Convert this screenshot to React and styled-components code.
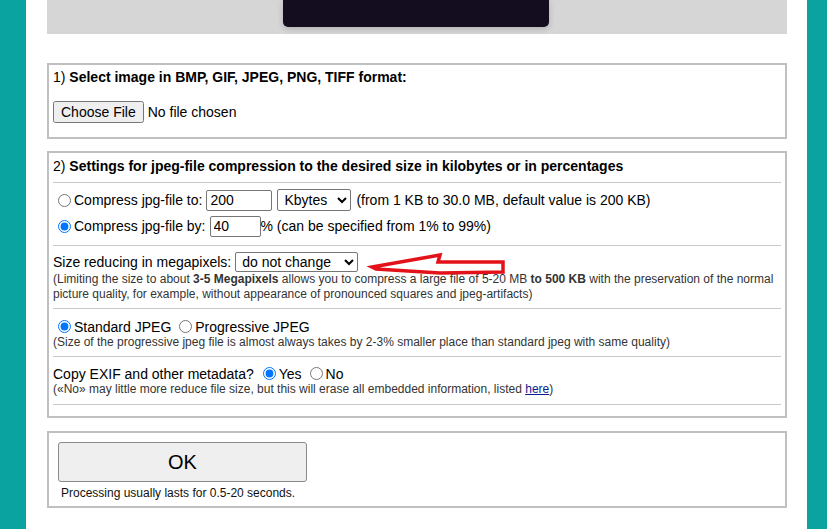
import React from "react";
import styled, { createGlobalStyle } from "styled-components";

const GlobalStyle = createGlobalStyle`
  html, body {
    margin: 0;
    padding: 0;
    background: #0aa39f;
  }
  body {
    font-family: "Liberation Sans", Arial, sans-serif;
    font-size: 14px;
    color: #000;
  }
`;

const Page = styled.div`
  min-height: 100vh;
  padding: 0 20px 0 26px;
`;

const Panel = styled.div`
  background: #fff;
  min-height: 100vh;
  padding: 0 20px 30px 21px;
`;

const Banner = styled.div`
  height: 34px;
  background: #d6d6d6;
  display: flex;
  justify-content: center;
  padding-right: 3px;
`;

const Screen = styled.div`
  width: 266px;
  height: 27px;
  background: #130d1f;
  border-radius: 0 0 5px 5px;
  box-shadow: 0 2px 6px rgba(0, 0, 0, 0.18);
`;

const Section = styled.div`
  position: relative;
  margin-top: ${(p) => p.$mt}px;
  border: 2px solid #c0c0c0;
  padding: ${(p) => p.$pad};
`;

const Heading = styled.div`
  line-height: 16px;
  font-weight: bold;

  span {
    font-weight: normal;
  }
`;

const FileRow = styled.div`
  margin-top: 16px;
  height: 22px;
  display: flex;
  align-items: center;

  input {
    font: 14px "Liberation Sans", Arial, sans-serif;
  }
`;

const Divider = styled.div`
  height: 1px;
  background: #c9c9c9;
  margin-top: ${(p) => p.$mt}px;
`;

const Row = styled.div`
  display: flex;
  align-items: center;
  white-space: nowrap;
  height: ${(p) => p.$h || 26}px;
  margin-top: ${(p) => p.$mt || 0}px;
`;

const Radio = styled.label`
  display: inline-flex;
  align-items: center;
  margin-right: ${(p) => p.$gap || 0}px;

  input {
    margin: 0 3px 0 5px;
    width: 13px;
    height: 13px;
  }
`;

const TextInput = styled.input`
  box-sizing: border-box;
  width: ${(p) => p.$w}px;
  height: 21px;
  margin: 0 0 0 4px;
  padding: 1px 3px;
  border: 1px solid #767676;
  border-radius: 2px;
  font: 14px "Liberation Sans", Arial, sans-serif;
`;

const Select = styled.select`
  box-sizing: border-box;
  width: ${(p) => p.$w}px;
  height: ${(p) => p.$h}px;
  margin: 0 5px 0 ${(p) => p.$ml}px;
  padding: 0 2px;
  border: 1px solid #767676;
  border-radius: 2px;
  background: #fff;
  font: 14px "Liberation Sans", Arial, sans-serif;
`;

const Note = styled.div`
  font-size: 12px;
  line-height: 15px;
  color: #333;

  a {
    color: #0b1b8f;
  }
`;

const OkButton = styled.button`
  display: block;
  width: 249px;
  height: 40px;
  margin-left: 9px;
  background: #efefef;
  border: 1px solid #8a8a8a;
  border-radius: 3px;
  font: 20px "Liberation Sans", Arial, sans-serif;
  color: #000;
`;

const Hint = styled.div`
  font-size: 12px;
  line-height: 15px;
  margin: 4px 0 0 12px;
  color: #111;
`;

const Arrow = styled.svg`
  position: absolute;
  left: 318px;
  top: 98px;
  overflow: visible;
`;

export default function App() {
  return (
    <>
      <GlobalStyle />
      <Page>
        <Panel>
          <Banner>
            <Screen />
          </Banner>

          <Section $mt={29} $pad="4px 4px 14px 4px">
            <Heading>
              <span>1)</span> Select image in BMP, GIF, JPEG, PNG, TIFF format:
            </Heading>
            <FileRow>
              <input type="file" />
            </FileRow>
          </Section>

          <Section $mt={12} $pad="5px 4px 11px 4px">
            <Heading>
              <span>2)</span> Settings for jpeg-file compression to the desired size in kilobytes or in percentages
            </Heading>
            <Divider $mt={8} />
            <Row $mt={4}>
              <Radio>
                <input type="radio" name="mode" />
                Compress jpg-file to:
              </Radio>
              <TextInput $w={66} defaultValue="200" />
              <Select $w={74} $h={22} $ml={5} defaultValue="kb">
                <option value="kb">Kbytes</option>
                <option value="mb">Mbytes</option>
              </Select>
              (from 1 KB to 30.0 MB, default value is 200 KB)
            </Row>
            <Row>
              <Radio>
                <input type="radio" name="mode" defaultChecked />
                Compress jpg-file by:
              </Radio>
              <TextInput $w={51} defaultValue="40" />
              % (can be specified from 1% to 99%)
            </Row>
            <Divider $mt={6} />
            <Row $mt={6} $h={20}>
              Size reducing in megapixels:
              <Select $w={123} $h={20} $ml={4} defaultValue="no">
                <option value="no">do not change</option>
              </Select>
            </Row>
            <Note>
              (Limiting the size to about <b>3-5 Megapixels</b> allows you to compress a large file of 5-20 MB <b>to 500 KB</b> with the preservation of the normal picture quality, for example, without appearance of pronounced squares and jpeg-artifacts)
            </Note>
            <Divider $mt={6} />
            <Row $mt={9} $h={17}>
              <Radio $gap={3}>
                <input type="radio" name="jpeg" defaultChecked />
                Standard JPEG
              </Radio>
              <Radio>
                <input type="radio" name="jpeg" />
                Progressive JPEG
              </Radio>
            </Row>
            <Note>
              (Size of the progressive jpeg file is almost always takes by 2-3% smaller place than standard jpeg with same quality)
            </Note>
            <Divider $mt={6} />
            <Row $mt={8} $h={17}>
              Copy EXIF and other metadata?&nbsp;
              <Radio $gap={3}>
                <input type="radio" name="exif" defaultChecked />
                Yes
              </Radio>
              <Radio>
                <input type="radio" name="exif" />
                No
              </Radio>
            </Row>
            <Note>
              («No» may little more reduce file size, but this will erase all embedded information, listed <a href="#">here</a>)
            </Note>
            <Divider $mt={7} />

            <Arrow width="140" height="30" viewBox="0 0 140 30">
              <polygon
                points="5,16 73,4 71,11 136,11 136,21 73,22 9,18"
                fill="none"
                stroke="#e3121a"
                strokeWidth="3.5"
                strokeLinejoin="miter"
              />
            </Arrow>
          </Section>

          <Section $mt={13} $pad="9px 4px 5px 0">
            <OkButton>OK</OkButton>
            <Hint>Processing usually lasts for 0.5-20 seconds.</Hint>
          </Section>
        </Panel>
      </Page>
    </>
  );
}
